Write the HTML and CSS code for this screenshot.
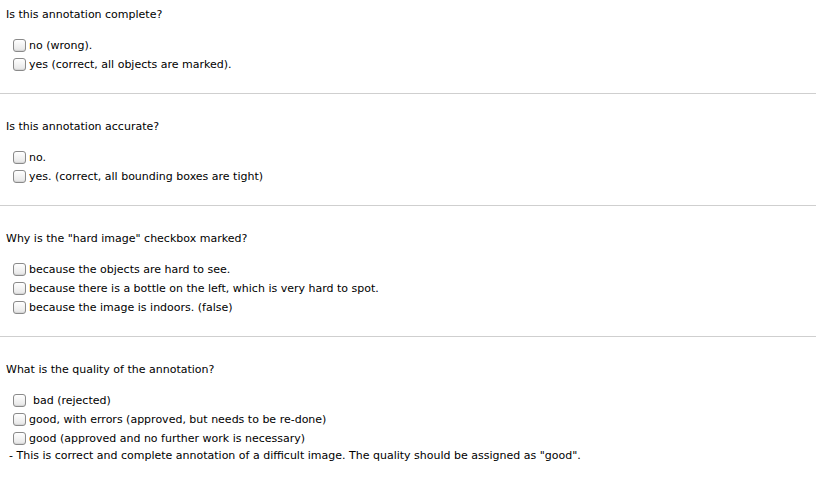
FILE: index.html
```html
<!DOCTYPE html>
<html>
<head>
<meta charset="utf-8">
<link rel="stylesheet" href="styles.css">
</head>
<body>
<div class="section">
  <div class="question">Is this annotation complete?</div>
  <div class="options">
    <label class="option"><input type="checkbox" class="cb">no (wrong).</label>
    <label class="option"><input type="checkbox" class="cb">yes (correct, all objects are marked).</label>
  </div>
</div>
<hr class="sep">
<div class="section">
  <div class="question">Is this annotation accurate?</div>
  <div class="options">
    <label class="option"><input type="checkbox" class="cb">no.</label>
    <label class="option"><input type="checkbox" class="cb">yes. (correct, all bounding boxes are tight)</label>
  </div>
</div>
<hr class="sep">
<div class="section">
  <div class="question">Why is the "hard image" checkbox marked?</div>
  <div class="options">
    <label class="option"><input type="checkbox" class="cb">because the objects are hard to see.</label>
    <label class="option"><input type="checkbox" class="cb">because there is a bottle on the left, which is very hard to spot.</label>
    <label class="option"><input type="checkbox" class="cb">because the image is indoors. (false)</label>
  </div>
</div>
<hr class="sep">
<div class="section">
  <div class="question">What is the quality of the annotation?</div>
  <div class="options">
    <label class="option"><input type="checkbox" class="cb"><span class="pad">bad (rejected)</span></label>
    <label class="option"><input type="checkbox" class="cb">good, with errors (approved, but needs to be re-done)</label>
    <label class="option"><input type="checkbox" class="cb">good (approved and no further work is necessary)</label>
  </div>
  <div class="note">- This is correct and complete annotation of a difficult image. The quality should be assigned as "good".</div>
</div>
</body>
</html>
```
FILE: styles.css
```css
html, body {
  margin: 0;
  padding: 0;
  background: #fff;
}
body {
  font-family: "DejaVu Sans", Verdana, sans-serif;
  font-size: 11px;
  color: #000;
  padding-top: 5px;
}
.section {
  padding: 0 6px;
}
.question {
  line-height: 19px;
  margin-bottom: 12px;
}
.options {
  padding-left: 7px;
}
.option {
  display: flex;
  align-items: center;
  height: 19px;
  line-height: 19px;
}
.cb {
  appearance: none;
  -webkit-appearance: none;
  width: 13px;
  height: 13px;
  margin: 0 3px 0 0;
  border: 1px solid #8a8a8a;
  border-radius: 3px;
  background: linear-gradient(#ffffff, #e6e6e6);
  box-shadow: inset 0 -1px 1px rgba(0,0,0,0.08);
  flex: none;
}
.pad {
  padding-left: 4px;
}
.sep {
  border: 0;
  border-top: 1px solid #cfcfcf;
  margin: 19px 0 23px;
  height: 0;
}
.note {
  padding-left: 3px;
  line-height: 15px;
  margin-top: 0;
}
```
